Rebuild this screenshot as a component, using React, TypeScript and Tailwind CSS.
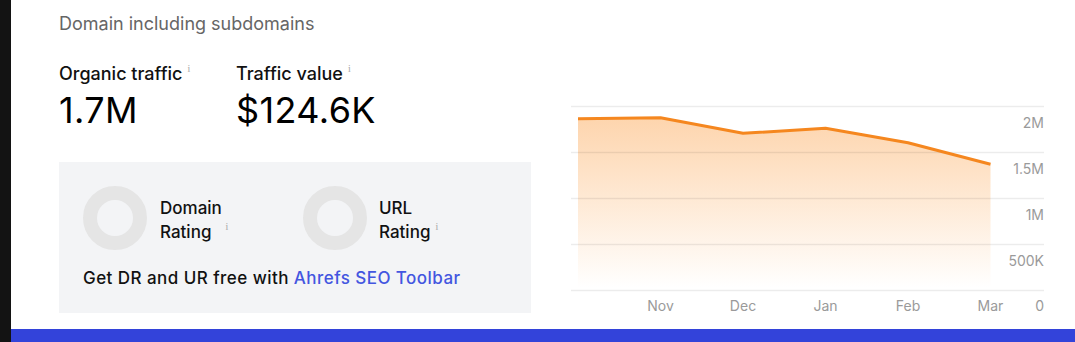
import React from "react";

const font = { fontFamily: "Inter, 'Noto Sans', sans-serif" };

function Info({ className = "" }: { className?: string }) {
  return (
    <span
      className={`ml-[5px] inline-block align-top text-[10px] leading-[14px] text-[#a8a8a8] ${className}`}
      style={{ fontFamily: "'Liberation Serif', serif" }}
    >
      i
    </span>
  );
}

function Ring() {
  return <div className="h-16 w-16 shrink-0 rounded-full border-[14px] border-[#e5e5e5]" />;
}

function Chart() {
  const pts: [number, number][] = [
    [578, 118.7],
    [660.5, 117.7],
    [743, 133.3],
    [825.5, 128.3],
    [908, 142.7],
    [990.5, 164.3],
  ];
  const line = pts.map((p) => p.join(",")).join(" ");
  const area = `578,291 ${line} 990.5,291`;
  const grid = [106.5, 152.5, 198.5, 244.5, 290.5];
  const yLabels: [string, number][] = [
    ["2M", 127.5],
    ["1.5M", 173.5],
    ["1M", 219.5],
    ["500K", 265.5],
    ["0", 311],
  ];
  const xLabels: [string, number][] = [
    ["Nov", 660.5],
    ["Dec", 743],
    ["Jan", 825.5],
    ["Feb", 908],
    ["Mar", 990.5],
  ];
  return (
    <svg width={473} height={230} viewBox="571 96 473 230" className="block">
      <defs>
        <linearGradient id="fillg" gradientUnits="userSpaceOnUse" x1="0" y1="118" x2="0" y2="288">
          <stop offset="0" stopColor="#fb8a1c" stopOpacity="0.36" />
          <stop offset="1" stopColor="#fb8a1c" stopOpacity="0" />
        </linearGradient>
      </defs>
      <polygon points={area} fill="url(#fillg)" />
      {grid.map((y) => (
        <line key={y} x1={571} x2={1044} y1={y} y2={y} stroke="rgba(0,0,0,0.075)" strokeWidth={1.3} />
      ))}
      <polyline points={line} fill="none" stroke="#f5871f" strokeWidth={3} strokeLinejoin="round" />
      {yLabels.map(([t, y]) => (
        <text key={t} x={1044} y={y} textAnchor="end" fontSize={14} fill="#9a9a9a" style={font}>
          {t}
        </text>
      ))}
      {xLabels.map(([t, x]) => (
        <text key={t} x={x} y={311} textAnchor="middle" fontSize={14} fill="#9a9a9a" style={font}>
          {t}
        </text>
      ))}
    </svg>
  );
}

export default function App() {
  return (
    <div className="flex h-[342px] w-[1075px] overflow-hidden bg-white" style={font}>
      <div className="w-[11px] shrink-0 bg-[#131313]" />
      <div className="flex flex-1 flex-col">
        <div className="flex flex-1 pl-[48px]">
          <div className="flex w-[472px] flex-col">
            <div className="pt-[12px] text-[18px] leading-[24px] text-[#666666]">
              Domain including subdomains
            </div>
            <div className="mt-[26px] flex">
              <div className="w-[177px]">
                <div className="text-[18px] font-medium leading-[24px] text-[#111111]">
                  Organic traffic
                  <Info />
                </div>
                <div className="mt-[4px] text-[36px] leading-[40px] tracking-[0.4px] text-black">1.7M</div>
              </div>
              <div>
                <div className="text-[18px] font-medium leading-[24px] text-[#111111]">
                  Traffic value
                  <Info />
                </div>
                <div className="mt-[4px] text-[36px] leading-[40px] tracking-[0.4px] text-black">$124.6K</div>
              </div>
            </div>
            <div className="mt-[32px] bg-[#f3f4f6] px-6 pb-[23px] pt-6">
              <div className="flex">
                <div className="flex w-[220px] items-center gap-[13px]">
                  <Ring />
                  <div className="pt-[4px] text-[17px] font-medium leading-[24px] text-[#111111]">
                    <div>Domain</div>
                    <div>
                      Rating
                      <Info className="ml-[14px]" />
                    </div>
                  </div>
                </div>
                <div className="flex items-center gap-[12px]">
                  <Ring />
                  <div className="pt-[4px] text-[17px] font-medium leading-[24px] text-[#111111]">
                    <div>URL</div>
                    <div>
                      Rating
                      <Info className="ml-[3px]" />
                    </div>
                  </div>
                </div>
              </div>
              <div className="mt-[16px] text-[17px] font-medium leading-[24px] tracking-[0.45px] text-[#111111]">
                Get DR and UR free with <span className="text-[#4356e0]">Ahrefs SEO Toolbar</span>
              </div>
            </div>
          </div>
          <div className="ml-[40px] pt-[96px]">
            <Chart />
          </div>
        </div>
        <div className="h-[13px] bg-[#3343da]" />
      </div>
    </div>
  );
}
